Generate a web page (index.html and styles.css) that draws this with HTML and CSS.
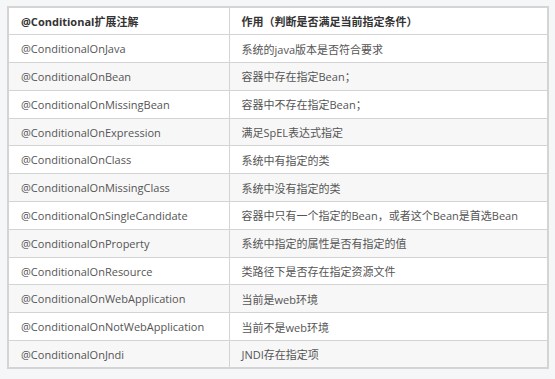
FILE: index.html
```html
<!DOCTYPE html>
<html lang="zh-CN">
<head>
    <meta charset="UTF-8">
    <title>Conditional扩展注解</title>
    <link rel="stylesheet" href="styles.css">
</head>
<body>

<!-- Conditional annotations table -->
<table class="cond-table">
    <colgroup>
        <col class="col-name">
        <col>
    </colgroup>
    <thead>
        <tr>
            <th>@Conditional扩展注解</th>
            <th>作用（判断是否满足当前指定条件）</th>
        </tr>
    </thead>
    <tbody>
        <tr><td>@ConditionalOnJava</td><td>系统的java版本是否符合要求</td></tr>
        <tr><td>@ConditionalOnBean</td><td>容器中存在指定Bean；</td></tr>
        <tr><td>@ConditionalOnMissingBean</td><td>容器中不存在指定Bean；</td></tr>
        <tr><td>@ConditionalOnExpression</td><td>满足SpEL表达式指定</td></tr>
        <tr><td>@ConditionalOnClass</td><td>系统中有指定的类</td></tr>
        <tr><td>@ConditionalOnMissingClass</td><td>系统中没有指定的类</td></tr>
        <tr><td>@ConditionalOnSingleCandidate</td><td>容器中只有一个指定的Bean，或者这个Bean是首选Bean</td></tr>
        <tr><td>@ConditionalOnProperty</td><td>系统中指定的属性是否有指定的值</td></tr>
        <tr><td>@ConditionalOnResource</td><td>类路径下是否存在指定资源文件</td></tr>
        <tr><td>@ConditionalOnWebApplication</td><td>当前是web环境</td></tr>
        <tr><td>@ConditionalOnNotWebApplication</td><td>当前不是web环境</td></tr>
        <tr><td>@ConditionalOnJndi</td><td>JNDI存在指定项</td></tr>
    </tbody>
</table>

</body>
</html>
```

FILE: styles.css
```css
html, body {
    margin: 0;
    background-color: #f5f6f8;
}

body {
    padding: 6px 7px;
    font-family: "Open Sans", "Noto Sans CJK SC", sans-serif;
    font-size: 11px;
    color: #555;
}

.cond-table {
    border-collapse: collapse;
    table-layout: fixed;
    width: 542px;
    background-color: #fff;
    border: 2px solid #d4d4d4;
}

.cond-table .col-name {
    width: 221px;
}

.cond-table tr {
    height: 27.8px;
}

.cond-table th, .cond-table td {
    border: 1px solid #d4d4d4;
    padding: 0 12px;
    text-align: left;
    white-space: nowrap;
}

.cond-table th {
    font-weight: bold;
    color: #333;
}

.cond-table tbody tr:nth-child(even) {
    background-color: #f7f7f7;
}
```
